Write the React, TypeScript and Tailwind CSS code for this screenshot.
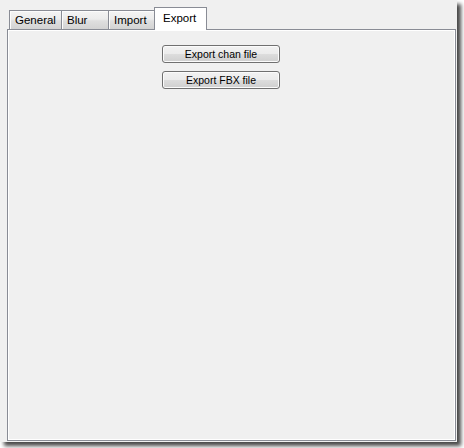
const tabFont = { fontFamily: '"Liberation Sans", Arial, sans-serif' };

function Tab({ label, width }: { label: string; width: string }) {
  return (
    <div
      className={`${width} h-[19px] -ml-px border border-b-0 border-[#898c95] bg-[linear-gradient(to_bottom,#f4f4f4_0%,#ececec_45%,#dfdfdf_55%,#d3d3d3_100%)] shadow-[inset_1px_1px_0_#fcfcfc] text-[11.5px] text-black pl-[5px] pt-[3px] leading-[13px]`}
    >
      {label}
    </div>
  );
}

function Button({ label }: { label: string }) {
  return (
    <button className="w-[118px] h-[18px] rounded-[3px] border border-[#707070] bg-[linear-gradient(to_bottom,#f2f2f2_0%,#ebebeb_50%,#dddddd_50%,#cfcfcf_100%)] shadow-[inset_0_0_0_1px_#fbfbfb] text-[10.5px] leading-[14px] text-black">
      {label}
    </button>
  );
}

export default function App() {
  return (
    <div className="w-[464px] h-[448px] bg-white" style={tabFont}>
      <div className="w-[457px] h-[442px] bg-[#f0f0f0] shadow-[4px_4px_4px_rgba(0,0,0,0.72)] flex flex-col pl-[7px] pr-px pb-px">
        <div className="h-[29px] flex items-end pl-[3px]">
          <Tab label="General" width="w-[53px]" />
          <Tab label="Blur" width="w-[48px]" />
          <Tab label="Import" width="w-[47px]" />
          <div className="relative z-10 w-[53px] h-[23px] -ml-px -mb-px border border-b-0 border-[#898c95] bg-white text-[11.5px] leading-[13px] text-black pl-[8px] pt-[4px]">
            Export
          </div>
        </div>
        <div className="flex-1 border border-[#898c95] shadow-[inset_0_0_0_1px_#ffffff] bg-[#f0f0f0] flex flex-col items-start gap-[8px] pt-[15px] pl-[154px]">
          <Button label="Export chan file" />
          <Button label="Export FBX file" />
        </div>
      </div>
    </div>
  );
}
